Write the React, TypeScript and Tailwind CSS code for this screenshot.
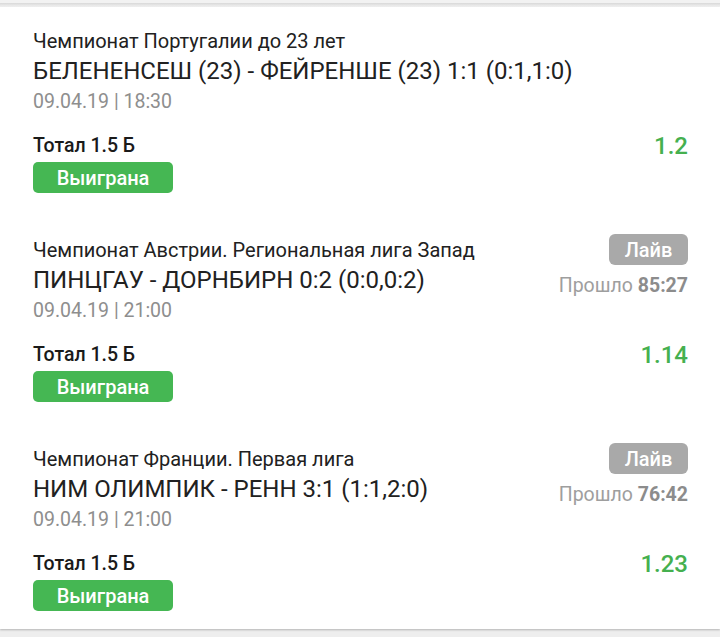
import React from "react";

type Bet = {
  league: string;
  title: string;
  date: string;
  odds: string;
  live?: string;
};

const bets: Bet[] = [
  {
    league: "Чемпионат Португалии до 23 лет",
    title: "БЕЛЕНЕНСЕШ (23) - ФЕЙРЕНШЕ (23) 1:1 (0:1,1:0)",
    date: "09.04.19 | 18:30",
    odds: "1.2",
  },
  {
    league: "Чемпионат Австрии. Региональная лига Запад",
    title: "ПИНЦГАУ - ДОРНБИРН 0:2 (0:0,0:2)",
    date: "09.04.19 | 21:00",
    odds: "1.14",
    live: "85:27",
  },
  {
    league: "Чемпионат Франции. Первая лига",
    title: "НИМ ОЛИМПИК - РЕНН 3:1 (1:1,2:0)",
    date: "09.04.19 | 21:00",
    odds: "1.23",
    live: "76:42",
  },
];

function BetBlock({ bet }: { bet: Bet }) {
  return (
    <div className="flex flex-col">
      <div className="flex justify-between items-start">
        <div className="flex flex-col">
          <div className="text-[20px] leading-[22px] text-[#212121]">{bet.league}</div>
          <div className="mt-[5px] text-[24px] leading-[28px] text-[#212121]">{bet.title}</div>
          <div className="mt-[6px] text-[19.5px] leading-[22px] text-[#8e8e8e]">{bet.date}</div>
        </div>
        {bet.live && (
          <div className="flex flex-col items-end -mt-[5px]">
            <div className="h-[31px] w-[79px] rounded-[6px] bg-[#a9a9a9] text-white text-[20px] font-medium flex items-center justify-center">
              Лайв
            </div>
            <div className="mt-[10px] text-[19.5px] leading-[22px] text-[#9e9e9e]">
              Прошло <span className="font-bold text-[#8c8c8c]">{bet.live}</span>
            </div>
          </div>
        )}
      </div>
      <div className="mt-[22px] flex justify-between items-start">
        <div className="flex flex-col">
          <div className="text-[19.5px] leading-[22px] font-medium text-[#1a1a1a]">Тотал 1.5 Б</div>
          <div className="mt-[5px] h-[31px] w-[140px] rounded-[5px] bg-[#45b753] text-white text-[20px] font-medium flex items-center justify-center">
            Выиграна
          </div>
        </div>
        <div className="text-[24px] leading-[22px] font-medium text-[#45b04f]">{bet.odds}</div>
      </div>
    </div>
  );
}

export default function App() {
  return (
    <div
      className="w-[720px] h-[637px] bg-[#eeeeee] flex flex-col overflow-hidden"
      style={{ fontFamily: "Roboto, 'Noto Sans', sans-serif" }}
    >
      <div className="h-[3px] bg-[#f2f2f2]" />
      <div className="h-[4px] bg-gradient-to-b from-[#d8d8d8] to-[#f4f4f4]" />
      <div className="bg-white flex flex-col gap-[46px] pl-[33px] pr-[32px] pt-[23px] pb-[18px] shadow-[0_1px_2px_rgba(0,0,0,0.25)]">
        {bets.map((b, i) => (
          <BetBlock key={i} bet={b} />
        ))}
      </div>
    </div>
  );
}
